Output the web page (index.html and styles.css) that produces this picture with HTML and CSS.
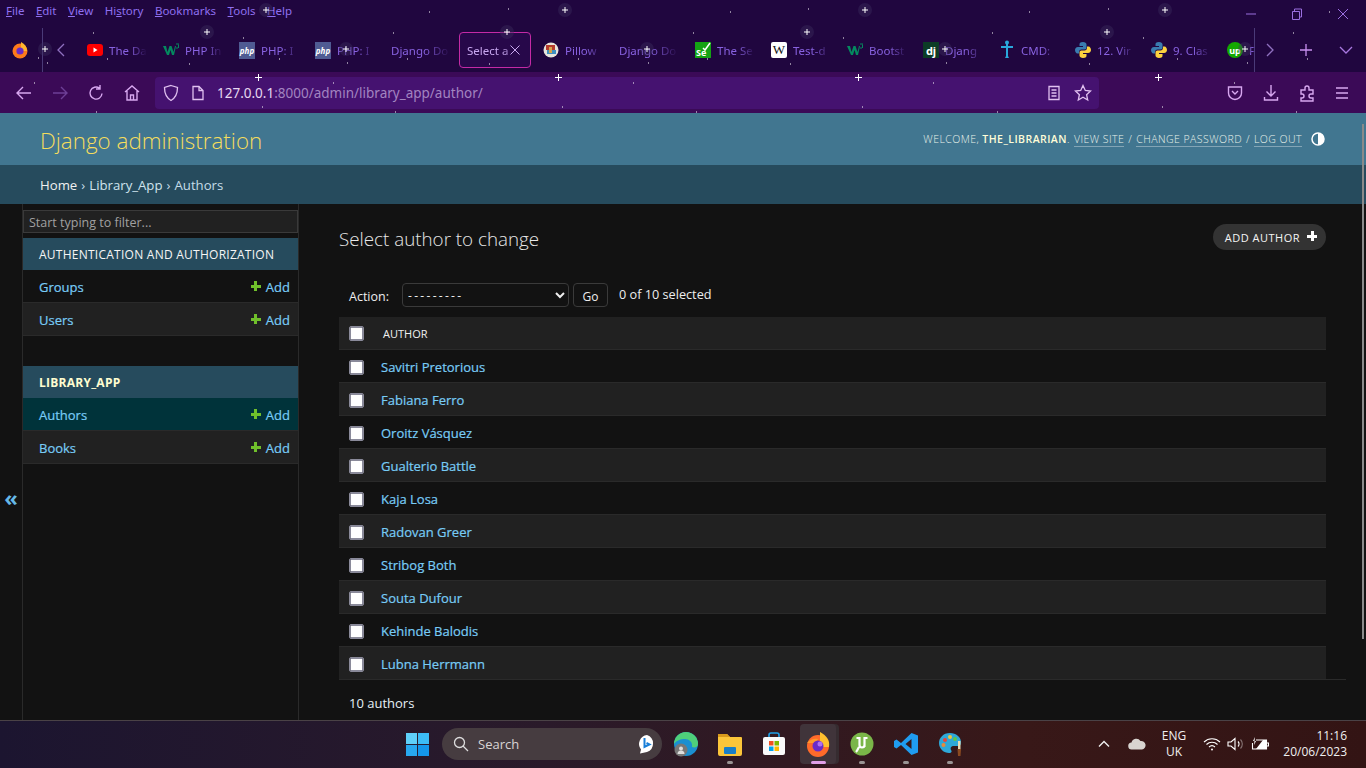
FILE: index.html
```html
<!DOCTYPE html>
<html lang="en">
  <head>
    <meta charset="UTF-8" />
    <meta name="viewport" content="width=device-width, initial-scale=1.0" />
    <title>Select author to change | Django site admin</title>
    <link rel="stylesheet" href="styles.css">
  </head>
  <body>
    <div class="browser">
      <div class="menubar">
        <span><u>F</u>ile</span>
        <span><u>E</u>dit</span>
        <span><u>V</u>iew</span>
        <span>Hi<u>s</u>tory</span>
        <span><u>B</u>ookmarks</span>
        <span><u>T</u>ools</span>
        <span><u>H</u>elp</span>
      </div>

      <div class="winControls">
        <svg width="12" height="12" viewBox="0 0 12 12"><path d="M1 6h10" /></svg>
        <svg width="12" height="12" viewBox="0 0 12 12"><path d="M1.500 3.500h7v8h-7zM3.500 3.500v-2.500h7v8h-2" /></svg>
        <svg width="12" height="12" viewBox="0 0 12 12"><path d="M1 1l10 10M11 1L1 11" /></svg>
      </div>

      <div class="tabstrip">
        <svg class="ffLogo" width="16" height="18" viewBox="0 0 16 18">
          <circle cx="8" cy="10" r="7.500" fill="#ff7a1a" />
          <path d="M9 1c4 2 6 5 6 9H9z" fill="#ffb52e" />
          <circle cx="8" cy="10" r="3.600" fill="#6b2bc4" />
        </svg>
        <div class="stripStart">
          <svg class="scrollBtn" width="10" height="14" viewBox="0 0 10 14"><path d="M8 1L2 7l6 6" /></svg>
        </div>
        <div class="tabs">
          <div class="tab">
            <svg width="16" height="16" viewBox="0 0 16 16"><rect y="2" width="16" height="12" rx="3" fill="#f00" /><path d="M6.500 5.500v5l4-2.500z" fill="#fff" /></svg>
            <span>The Da</span>
          </div>
          <div class="tab">
            <svg width="16" height="16" viewBox="0 0 16 16"><path d="M0 4h3l1.500 6L6.500 4h2l2 6L12 4h1l-2 9H9L7.500 8 6 13H4z" fill="#04895f" /><path d="M13 2h3v1l-1 1 1 1-1 1h-2" fill="none" stroke="#04895f" /></svg>
            <span>PHP In</span>
          </div>
          <div class="tab">
            <span class="fav favPhp">php</span>
            <span>PHP: I</span>
          </div>
          <div class="tab">
            <span class="fav favPhp">php</span>
            <span>PHP: I</span>
          </div>
          <div class="tab">
            <span>Django Do</span>
          </div>
          <div class="tab tabActive">
            <span>Select a</span>
            <svg class="tabClose" width="12" height="12" viewBox="0 0 12 12"><path d="M1.500 1.500l9 9M10.500 1.500l-9 9" /></svg>
          </div>
          <div class="tab">
            <svg width="16" height="16" viewBox="0 0 16 16"><circle cx="8" cy="8" r="7.500" fill="#e8e4dc" /><path d="M3 3h9v5H3z" fill="#b53a2c" /><path d="M4 8h9v4H4z" fill="#3f8fc0" /><path d="M6 5h3v6H6z" fill="#d6a34a" /></svg>
            <span>Pillow</span>
          </div>
          <div class="tab">
            <span>Django Do</span>
          </div>
          <div class="tab">
            <svg width="16" height="16" viewBox="0 0 16 16"><rect width="16" height="16" fill="#14a314" /><path d="M8 6l2 2 5-7" fill="none" stroke="#fff" stroke-width="1.500" /><text x="1" y="14" class="seText">Se</text></svg>
            <span>The Se</span>
          </div>
          <div class="tab">
            <span class="fav favWiki">W</span>
            <span>Test-d</span>
          </div>
          <div class="tab">
            <svg width="16" height="16" viewBox="0 0 16 16"><path d="M0 4h3l1.500 6L6.500 4h2l2 6L12 4h1l-2 9H9L7.500 8 6 13H4z" fill="#04895f" /><path d="M13 2h3v1l-1 1 1 1-1 1h-2" fill="none" stroke="#04895f" /></svg>
            <span>Bootst</span>
          </div>
          <div class="tab">
            <span class="fav favDj">dj</span>
            <span>Djang</span>
          </div>
          <div class="tab">
            <svg width="16" height="20" viewBox="0 0 16 20"><circle cx="8" cy="2.500" r="2" fill="#2aa7dc" /><path d="M7 4h2v2h5v2H9v8l1 2H6l1-2V8H2V6h5z" fill="#2aa7dc" /></svg>
            <span>CMD:</span>
          </div>
          <div class="tab">
            <svg width="16" height="16" viewBox="0 0 16 16"><use href="#pyLogo" /></svg>
            <span>12. Vir</span>
          </div>
          <div class="tab">
            <svg width="16" height="16" viewBox="0 0 16 16"><use href="#pyLogo" /></svg>
            <span>9. Clas</span>
          </div>
          <div class="tab tabLast">
            <span class="fav favUp">up</span>
            <span>F</span>
          </div>
        </div>
        <div class="stripEnd">
          <svg class="scrollBtn" width="10" height="14" viewBox="0 0 10 14"><path d="M2 1l6 6-6 6" /></svg>
          <svg class="newTab" width="14" height="14" viewBox="0 0 14 14"><path d="M7 1v12M1 7h12" /></svg>
          <svg class="allTabs" width="14" height="10" viewBox="0 0 14 10"><path d="M1 2l6 6 6-6" /></svg>
        </div>
      </div>

      <div class="navbar">
        <svg class="navIcon" width="18" height="18" viewBox="0 0 18 18"><path d="M16 9H2M8 3L2 9l6 6" /></svg>
        <svg class="navIcon navOff" width="18" height="18" viewBox="0 0 18 18"><path d="M2 9h14M10 3l6 6-6 6" /></svg>
        <svg class="navIcon" width="18" height="18" viewBox="0 0 18 18"><path d="M15 9.500A6 6 0 1 1 12.500 4.200M13 1v4h-4" /></svg>
        <svg class="navIcon" width="18" height="18" viewBox="0 0 18 18"><path d="M2 8l7-6 7 6M4 7v9h10V7M7.500 16v-5h3v5" /></svg>
        <div class="urlbar">
          <svg class="urlIcon" width="16" height="18" viewBox="0 0 16 18"><path d="M8 1.500l6.500 2c0 6-1.500 10-6.500 13-5-3-6.500-7-6.500-13z" /></svg>
          <svg class="urlIcon" width="14" height="16" viewBox="0 0 14 16"><path d="M2 1.500h6l4 4v9H2zM8 1.500v4h4" /></svg>
          <span class="urlText">127.0.0.1<span class="urlDim">:8000/admin/library_app/author/</span></span>
          <div class="urlEnd">
            <svg class="urlIcon" width="14" height="16" viewBox="0 0 14 16"><path d="M2 1.500h10v13H2zM4.500 5h5M4.500 8h5M4.500 11h5" /></svg>
            <svg class="urlIcon" width="18" height="18" viewBox="0 0 18 18"><path d="M9 1.500l2.300 5 5.200.6-3.900 3.600 1.100 5.300L9 13.300 4.300 16l1.100-5.300-3.900-3.600 5.200-.6z" /></svg>
          </div>
        </div>
        <div class="navRight">
          <svg class="navIcon" width="16" height="18" viewBox="0 0 16 18"><path d="M1.500 3h13v6a6.500 6.500 0 0 1-13 0zM5 7l3 3 3-3" /></svg>
          <svg class="navIcon" width="16" height="18" viewBox="0 0 16 18"><path d="M8 1v11M3.500 7.500L8 12l4.500-4.500M1.500 13v3h13v-3" /></svg>
          <svg class="navIcon" width="16" height="18" viewBox="0 0 16 18"><path d="M2 6h4V4a2 2 0 0 1 4 0v2h4v4h-2a2 2 0 0 0 0 4h2v3H2v-3h1a2 2 0 0 0 0-4H2z" /></svg>
          <svg class="navIcon" width="14" height="18" viewBox="0 0 14 18"><path d="M1 4h12M1 9h12M1 14h12" /></svg>
        </div>
      </div>

      <svg class="stars" width="1366" height="113" viewBox="0 0 1366 113">
        <defs>
          <symbol id="pyLogo" viewBox="0 0 16 16">
            <path d="M8 0C5 0 4.500 1 4.500 2.500V4H8v1H3C1 5 0 6.500 0 8s1 3.500 2.500 3.500H4V10c0-1.500 1-2.500 2.500-2.500h3c1.500 0 2-1 2-2v-3C11.500 1 10 0 8 0z" fill="#3a7cb0" />
            <path d="M8 16c3 0 3.500-1 3.500-2.500V12H8v-1h5c2 0 3-1.500 3-3s-1-3.500-2.500-3.500H12V6c0 1.500-1 2.500-2.500 2.500h-3c-1.500 0-2 1-2 2v3C4.500 15 6 16 8 16z" fill="#fdd23e" />
          </symbol>
          <g id="star">
            <circle r="7" fill="#3c3060" fill-opacity="0.4" />
            <path d="M-3 0h6M0-3v6" stroke="#fff" stroke-width="1" />
          </g>
        </defs>
        <use href="#star" x="45" y="49" /><use href="#star" x="207" y="32" /><use href="#star" x="266" y="10" />
        <use href="#star" x="565" y="10" /><use href="#star" x="507" y="32" /><use href="#star" x="346" y="49" />
        <use href="#star" x="647" y="49" /><use href="#star" x="865" y="10" /><use href="#star" x="1165" y="10" />
        <use href="#star" x="807" y="32" /><use href="#star" x="1107" y="32" /><use href="#star" x="945" y="49" />
        <use href="#star" x="1245" y="49" />
        <path class="starPlain" d="M255 77.500h7M258.500 74v7M555 77.500h7M558.500 74v7M855 77.500h7M858.500 74v7M1155 77.500h7M1158.500 74v7" />
        <path class="starDots" d="M93 33h1M243 38h1M393 33h1M38 58h1M47 63h1M107 59h1M189 64h1M279 59h1M347 63h1M407 59h1M489 64h1M578 59h1M648 63h1M429 12h1M508 9h1M333 83h1M633 83h1M34 83h1M262 107h1M562 107h1M96 112h1M395 112h1M730 12h1M808 9h1M1029 12h1M1108 9h1M1329 12h1M693 33h1M843 38h1M992 33h1M1143 38h1M1293 33h1M707 59h1M790 64h1M946 63h1M1089 64h1M1247 63h1M1307 59h1M1177 59h1M933 83h1M1234 83h1M862 107h1M1162 107h1M696 112h1M997 112h1M1296 112h1" />
      </svg>
    </div>

    <header class="siteHeader">
      <h1 class="brand">Django administration</h1>
      <div class="userTools">
        <span>Welcome, <strong>the_librarian</strong>.</span>
        <a>View site</a> / <a>Change password</a> / <a>Log out</a>
        <svg class="themeToggle" width="14" height="14" viewBox="0 0 14 14"><circle cx="7" cy="7" r="6" fill="none" stroke="#fff" stroke-width="1.500" /><path d="M7 1a6 6 0 0 1 0 12z" fill="#fff" /></svg>
      </div>
    </header>

    <div class="breadcrumbs">
      <a>Home</a><span class="crumbSep">›</span><a>Library_App</a><span class="crumbSep">›</span>Authors
    </div>

    <div class="adminBody">
      <div class="sideToggle"><span>«</span></div>

      <aside class="sidebar">
        <input class="navFilter" type="text" placeholder="Start typing to filter..." />

        <div class="appList">
          <div class="appCaption">Authentication and Authorization</div>
          <div class="modelRow"><a>Groups</a><a class="addLink"><i class="plus"></i>Add</a></div>
          <div class="modelRow rowAlt"><a>Users</a><a class="addLink"><i class="plus"></i>Add</a></div>
        </div>

        <div class="appList">
          <div class="appCaption captionStrong">Library_App</div>
          <div class="modelRow rowCurrent"><a>Authors</a><a class="addLink"><i class="plus"></i>Add</a></div>
          <div class="modelRow rowAlt"><a>Books</a><a class="addLink"><i class="plus"></i>Add</a></div>
        </div>
      </aside>

      <main class="content">
        <div class="titleRow">
          <h2 class="pageTitle">Select author to change</h2>
          <a class="addButton">Add author<i class="plus plusWhite"></i></a>
        </div>

        <div class="actions">
          <label class="actionLabel">Action:</label>
          <select class="actionSelect"><option>---------</option></select>
          <button class="goBtn">Go</button>
          <span class="selCount">0 of 10 selected</span>
        </div>

        <div class="resultList">
          <div class="resultHead"><span class="check"></span><span class="colName">Author</span></div>
          <div class="resultRow"><span class="check"></span><a>Savitri Pretorious</a></div>
          <div class="resultRow rowAlt"><span class="check"></span><a>Fabiana Ferro</a></div>
          <div class="resultRow"><span class="check"></span><a>Oroitz Vásquez</a></div>
          <div class="resultRow rowAlt"><span class="check"></span><a>Gualterio Battle</a></div>
          <div class="resultRow"><span class="check"></span><a>Kaja Losa</a></div>
          <div class="resultRow rowAlt"><span class="check"></span><a>Radovan Greer</a></div>
          <div class="resultRow"><span class="check"></span><a>Stribog Both</a></div>
          <div class="resultRow rowAlt"><span class="check"></span><a>Souta Dufour</a></div>
          <div class="resultRow"><span class="check"></span><a>Kehinde Balodis</a></div>
          <div class="resultRow rowAlt"><span class="check"></span><a>Lubna Herrmann</a></div>
        </div>

        <div class="paginator">10 authors</div>
      </main>

      <div class="pageScroll"></div>
    </div>

    <footer class="taskbar">
      <div class="taskApps">
        <svg class="winLogo" width="23" height="23" viewBox="0 0 24 24">
          <rect width="11.500" height="11.500" fill="#5fd0fa" /><rect x="12.500" width="11.500" height="11.500" fill="#3cbcf6" />
          <rect y="12.500" width="11.500" height="11.500" fill="#28a8f0" /><rect x="12.500" y="12.500" width="11.500" height="11.500" fill="#1496ea" />
        </svg>
        <div class="searchPill">
          <svg width="16" height="16" viewBox="0 0 16 16"><circle cx="6.500" cy="6.500" r="5" fill="none" stroke="#ddd" stroke-width="1.300" /><path d="M10 10l5 5" stroke="#ddd" stroke-width="1.300" /></svg>
          <span>Search</span>
          <svg class="bingIcon" width="20" height="20" viewBox="0 0 20 20"><path d="M10 1a9 9 0 0 1 0 17l-7 1.500 1-4A9 9 0 0 1 10 1z" fill="#fff" /><path d="M7.500 4v9l5-2.500-3-1.500" fill="none" stroke="#1a7fd8" stroke-width="2" /></svg>
        </div>
        <div class="taskIcon">
          <svg width="26" height="26" viewBox="0 0 26 26"><circle cx="13" cy="13" r="12" fill="#1b8fd0" /><path d="M1 13a12 12 0 0 1 24 0c0 3-3 4-6 3 1-5-3-8-7-8-5 0-9 2-11 5z" fill="#4fcf7a" /><circle cx="8" cy="19" r="6.500" fill="#777" /><circle cx="8" cy="17.500" r="2" fill="#ddd" /><path d="M4.500 23a3.500 3.500 0 0 1 7 0z" fill="#ddd" /></svg>
        </div>
        <div class="taskIcon running">
          <svg width="26" height="24" viewBox="0 0 26 24"><path d="M1 4a2 2 0 0 1 2-2h7l3 3h11a1 1 0 0 1 1 1v16a2 2 0 0 1-2 2H3a2 2 0 0 1-2-2z" fill="#fcc63a" /><path d="M1 2h9l3 3H1z" fill="#d99a1c" /><rect x="7" y="15" width="12" height="7" rx="1" fill="#1a7fc8" /></svg>
        </div>
        <div class="taskIcon">
          <svg width="22" height="24" viewBox="0 0 22 24"><path d="M6 6V3a2 2 0 0 1 2-2h6a2 2 0 0 1 2 2v3" fill="none" stroke="#1ea0e8" stroke-width="1.600" /><rect y="5" width="22" height="18" rx="2" fill="#fafafa" /><rect x="6" y="9" width="4.500" height="4.500" fill="#f25022" /><rect x="11.500" y="9" width="4.500" height="4.500" fill="#7fba00" /><rect x="6" y="14.500" width="4.500" height="4.500" fill="#00a4ef" /><rect x="11.500" y="14.500" width="4.500" height="4.500" fill="#ffb900" /></svg>
        </div>
        <div class="taskIcon current">
          <svg width="24" height="26" viewBox="0 0 24 26"><circle cx="12" cy="15" r="11" fill="#ff6a2a" /><path d="M14 1c7 4 10 8 9 15H14z" fill="#ffc02e" /><path d="M1 12c3-4 8-5 11-4l-2 4z" fill="#ff9a2a" /><circle cx="12" cy="15" r="5.500" fill="#6a2bc8" /><circle cx="14" cy="13" r="2.500" fill="#b070f0" /></svg>
        </div>
        <div class="taskIcon running">
          <svg width="24" height="24" viewBox="0 0 24 24"><circle cx="12" cy="12" r="11.500" fill="#7ab648" /><path d="M6.500 6h3v7a2.500 2.500 0 0 0 5 0V6h3M14.500 6v9M9 15c-1 2-2 4-3 5" fill="none" stroke="#fff" stroke-width="2.200" /></svg>
        </div>
        <div class="taskIcon running">
          <svg width="24" height="24" viewBox="0 0 24 24"><path d="M17.500 1L24 3.500v17L17.500 23 7 13l-4.500 3.500L0 15v-6l2.500-1.500L7 11zM17.500 7l-6 5 6 5z" fill="#1f9cf0" fill-rule="evenodd" /></svg>
        </div>
        <div class="taskIcon running">
          <svg width="24" height="26" viewBox="0 0 24 26"><path d="M12 2C5 2 1 7 1 12c0 6 5 10 10 10 3 0 3-2 2-3-1-2 0-4 3-4h4c2 0 3-1 3-4 0-5-5-9-11-9z" fill="#2ea8d8" /><circle cx="7" cy="9" r="2" fill="#e8443a" /><circle cx="12" cy="6" r="2" fill="#f0c53a" /><circle cx="17" cy="8" r="2" fill="#5cc84a" /><circle cx="5.500" cy="14" r="2" fill="#e88a3a" /><path d="M20 10h2.500v9H20z" fill="#e8d9b0" /><path d="M19.500 18h3.500l-.5 7h-2.500z" fill="#8a4a20" /></svg>
        </div>
      </div>

      <div class="tray">
        <svg class="trayChevron" width="12" height="8" viewBox="0 0 12 8"><path d="M1 6.500l5-5 5 5" /></svg>
        <svg class="trayCloud" width="18" height="12" viewBox="0 0 18 12"><path d="M4 11.500a3.500 3.500 0 0 1-.5-7A5 5 0 0 1 12.500 3a4.300 4.300 0 0 1 1.500 8.500z" fill="#d8d4d0" /></svg>
        <div class="trayLang">ENG<br />UK</div>
        <svg class="trayIcon trayWifi" width="18" height="14" viewBox="0 0 18 14"><path d="M1 5a11.500 11.500 0 0 1 16 0M3.500 7.500a8 8 0 0 1 11 0M6 10a4.500 4.500 0 0 1 6 0" /><circle cx="9" cy="12.500" r="1" fill="#fff" stroke="none" /></svg>
        <svg class="trayIcon" width="18" height="14" viewBox="0 0 18 14"><path d="M1 5h3l4-3.500v11L4 9H1zM11 4.500a3.500 3.500 0 0 1 0 5" /><path d="M13.500 2.500a6.500 6.500 0 0 1 0 9" stroke-opacity="0.4" /></svg>
        <svg class="trayIcon" width="18" height="14" viewBox="0 0 18 14"><path d="M5 3h10.500v9H1.500V6M16 6h1.500v3H16" /><path d="M4 0L2 4h3L3 8M5 12l7-9h3.500v9z" fill="#fff" stroke="none" /></svg>
        <div class="trayClock">11:16<br />20/06/2023</div>
      </div>
    </footer>
  </body>
</html>
```

FILE: styles.css
```css
* {
  margin: 0;
  padding: 0;
  box-sizing: border-box;
}

html,
body {
  height: 100%;
  overflow: hidden;
}

body {
  display: flex;
  flex-direction: column;
  background: #121212;
  font-family: "Open Sans", "Noto Sans", sans-serif;
  font-size: 13px;
  color: #eeeeee;
}

/* browser chrome */
.browser {
  position: relative;
  height: 113px;
  flex: none;
  background: #20063f;
}

.menubar {
  display: flex;
  gap: 11.500px;
  height: 22px;
  padding: 2px 0 0 6px;
  font-family: "Noto Sans", sans-serif;
  font-size: 11.500px;
  line-height: 18px;
  color: #8f70f0;
}

.winControls {
  position: absolute;
  top: 8px;
  right: 17px;
  display: flex;
  gap: 34px;
}

.winControls svg {
  fill: none;
  stroke: #9a6fe0;
  stroke-width: 1;
}

.tabstrip {
  display: flex;
  align-items: center;
  height: 50px;
  padding-top: 6px;
}

.ffLogo {
  flex: none;
  margin-left: 12px;
}

.stripStart {
  display: flex;
  align-items: center;
  flex: none;
  height: 44px;
  margin-left: 14px;
  padding-left: 13px;
  border-left: 1px solid #4a3a78;
}

.scrollBtn {
  flex: none;
  fill: none;
  stroke: #8f70c0;
  stroke-width: 1.300;
}

.tabs {
  display: flex;
  gap: 4px;
  flex: none;
  width: 1175px;
  margin-left: 13px;
}

.tab {
  position: relative;
  display: flex;
  align-items: center;
  gap: 6px;
  flex: none;
  width: 72px;
  height: 36px;
  padding: 0 4px 0 8px;
  border-radius: 4px;
  font-family: "Noto Sans", sans-serif;
  font-size: 11.500px;
  color: #8862e0;
  white-space: nowrap;
}

.tab > svg,
.tab > .fav {
  flex: none;
}

.tab > span:not(.fav) {
  flex: 1;
  -webkit-mask-image: linear-gradient(to right, #000 55%, transparent);
  mask-image: linear-gradient(to right, #000 55%, transparent);
}

.tabLast {
  width: 36px;
  padding-right: 0;
}

.tabActive {
  outline: 1px solid #c42aa6;
  outline-offset: -1px;
  background: #27084a;
  color: #c8a8f0;
}

/* sits over the end of the faded tab title */
.tab > .tabClose {
  position: absolute;
  top: 12px;
  right: 10px;
  fill: none;
  stroke: #c8a8f0;
  stroke-width: 1;
}

.fav {
  display: flex;
  align-items: center;
  justify-content: center;
  width: 16px;
  height: 16px;
}

.favPhp {
  height: 17px;
  background: #4f5b93;
  color: #fff;
  font-size: 8px;
  font-style: italic;
  font-weight: 700;
}

.favWiki {
  background: #fff;
  border-radius: 2px;
  color: #111;
  font-family: "Liberation Serif", serif;
  font-size: 13px;
}

.favDj {
  background: #0c3c26;
  color: #fff;
  font-size: 11px;
  font-weight: 700;
}

.favUp {
  background: #14a800;
  border-radius: 50%;
  color: #fff;
  font-size: 9px;
  font-weight: 700;
}

.seText {
  font-family: "Noto Sans", sans-serif;
  font-size: 9px;
  font-weight: 700;
  fill: #fff;
}

.stripEnd {
  display: flex;
  align-items: center;
  flex: none;
  height: 44px;
  border-left: 1px solid #4a3a78;
}

.stripEnd .scrollBtn {
  margin-left: 10px;
}

.newTab {
  margin-left: 24px;
  fill: none;
  stroke: #c890f0;
  stroke-width: 1.300;
}

.allTabs {
  margin-left: 26px;
  fill: none;
  stroke: #a878e0;
  stroke-width: 1.300;
}

.navbar {
  display: flex;
  align-items: center;
  height: 41px;
  padding-left: 15px;
  background: #3b0a57;
}

.navIcon {
  flex: none;
  margin-right: 18px;
  fill: none;
  stroke: #d8a8f0;
  stroke-width: 1.400;
}

.navOff {
  stroke: #6d3f96;
}

.urlbar {
  display: flex;
  align-items: center;
  gap: 12px;
  width: 944px;
  height: 32px;
  margin-left: -4px;
  padding-left: 8px;
  border-radius: 4px;
  background: #451270;
  font-family: "Noto Sans", sans-serif;
  font-size: 13.500px;
}

.urlIcon {
  flex: none;
  fill: none;
  stroke: #e0c0f0;
  stroke-width: 1.300;
}

.urlText {
  color: #e6d8f0;
}

.urlDim {
  color: #a284c0;
}

.urlEnd {
  display: flex;
  align-items: center;
  gap: 13px;
  margin-left: auto;
  padding-right: 7px;
}

.navRight {
  display: flex;
  align-items: center;
  margin-left: auto;
}

.navRight .navIcon {
  margin-right: 20px;
}

.navRight .navIcon:last-child {
  margin-right: 17px;
}

.stars {
  position: absolute;
  top: 0;
  left: 0;
  pointer-events: none;
}

.starPlain,
.starDots {
  stroke: #fff;
  stroke-width: 1;
}

/* django header */
.siteHeader {
  display: flex;
  align-items: center;
  justify-content: space-between;
  flex: none;
  height: 52px;
  padding: 0 41px 0 40px;
  background: #417690;
}

.brand {
  padding-top: 2px;
  font-size: 22.400px;
  font-weight: 300;
  color: #f5dd5d;
}

.userTools {
  display: flex;
  align-items: center;
  gap: 4px;
  font-size: 10.500px;
  font-weight: 300;
  letter-spacing: 0.45px;
  text-transform: uppercase;
  color: #e8f2ea;
}

.userTools strong {
  font-weight: 600;
  color: #fffdd8;
}

.userTools a {
  border-bottom: 1px solid rgba(255, 255, 255, 0.35);
}

.themeToggle {
  margin-left: 5px;
}

.breadcrumbs {
  flex: none;
  height: 39px;
  padding: 0 40px;
  background: #264b5d;
  font-size: 13.200px;
  line-height: 41px;
  color: #c4dce8;
}

.breadcrumbs a {
  color: #f0f0f0;
}

.breadcrumbs a + .crumbSep + a {
  color: #cfe4ee;
}

.crumbSep {
  margin: 0 4px;
}

/* admin layout */
.adminBody {
  position: relative;
  display: flex;
  flex: 1;
  min-height: 0;
}

.sideToggle {
  display: flex;
  align-items: center;
  justify-content: center;
  flex: none;
  width: 23px;
  border-right: 1px solid #2a2a2a;
  padding-top: 70px;
  font-size: 22px;
  font-weight: 700;
  color: #66b8e8;
}

.sidebar {
  flex: none;
  width: 276px;
  padding-top: 6px;
  border-right: 1px solid #2a2a2a;
}

.navFilter {
  display: block;
  width: 100%;
  height: 23px;
  margin-bottom: 5px;
  padding: 2px 5px 0;
  border: 1px solid #3a3a3a;
  background: #212121;
  font: 12.500px "Open Sans", sans-serif;
  color: #eee;
}

.navFilter::placeholder {
  color: #a0a0a0;
  opacity: 1;
}

.appList {
  margin-bottom: 30px;
}

.appCaption {
  height: 32px;
  padding-left: 16px;
  background: #264b5d;
  font-size: 12px;
  line-height: 34px;
  letter-spacing: 0.25px;
  text-transform: uppercase;
  color: #f5f5f5;
}

.captionStrong {
  font-weight: 700;
  color: #fffdd0;
}

.modelRow {
  display: flex;
  align-items: center;
  justify-content: space-between;
  height: 33px;
  padding: 2px 8px 0 16px;
  border-bottom: 1px solid #2a2a2a;
  color: #78ccf6;
  -webkit-text-stroke: 0.2px;
}

.rowAlt {
  background: #212121;
}

.rowCurrent {
  background: #00333a;
}

.addLink {
  display: flex;
  align-items: center;
  gap: 5px;
}

.plus {
  position: relative;
  top: -1px;
  display: inline-block;
  width: 10px;
  height: 10px;
  background:
    linear-gradient(#70bf2b, #70bf2b) center / 100% 3px no-repeat,
    linear-gradient(#70bf2b, #70bf2b) center / 3px 100% no-repeat;
}

.plusWhite {
  background:
    linear-gradient(#fff, #fff) center / 100% 3px no-repeat,
    linear-gradient(#fff, #fff) center / 3px 100% no-repeat;
}

.content {
  flex: 1;
  min-width: 0;
  padding: 20px 20px 0 40px;
}

.titleRow {
  display: flex;
  align-items: flex-start;
  justify-content: space-between;
  height: 59px;
  padding-right: 20px;
}

.pageTitle {
  padding-top: 2px;
  font-size: 18.800px;
  font-weight: 300;
  color: #e8e8e8;
}

.addButton {
  display: flex;
  align-items: center;
  gap: 7px;
  height: 26px;
  padding: 0 9px 0 12px;
  border-radius: 13px;
  background: #333333;
  font-size: 11px;
  letter-spacing: 0.5px;
  text-transform: uppercase;
  color: #f5f5f5;
}

.actions {
  display: flex;
  align-items: center;
  height: 24px;
  margin-bottom: 10px;
  padding-left: 10px;
  font-size: 12.500px;
}

.actionLabel {
  padding-top: 2px;
}

.actionSelect {
  width: 167px;
  height: 24px;
  margin-left: 13px;
  padding-left: 1px;
  border: 1px solid #3a3a3a;
  border-radius: 4px;
  background: #121212;
  font: 12px "Open Sans", sans-serif;
  letter-spacing: 2.300px;
  color: #eee;
}

.goBtn {
  width: 35px;
  height: 24px;
  margin-left: 4px;
  padding-top: 2px;
  border: 1px solid #3a3a3a;
  border-radius: 4px;
  background: #121212;
  font: 12px "Open Sans", sans-serif;
  color: #eee;
}

.selCount {
  margin-left: 11px;
  margin-top: -3px;
  font-size: 12.700px;
}

.resultList {
  margin-right: 20px;
}

.resultHead,
.resultRow {
  display: flex;
  align-items: center;
  height: 33px;
  padding-left: 10px;
  border-bottom: 1px solid #2a2a2a;
}

.resultRow {
  padding-top: 2px;
}

.resultHead {
  background: #212121;
}

.colName {
  margin-left: 19px;
  font-size: 11px;
  font-weight: 500;
  text-transform: uppercase;
  color: #f0f0f0;
}

.resultRow a {
  margin-left: 17px;
  font-weight: 500;
  color: #78ccf6;
  -webkit-text-stroke: 0.2px;
}

.check {
  flex: none;
  width: 13px;
  height: 13px;
  border: 1px solid #8a8a9a;
  outline: 1px solid #8a8a9a;
  border-radius: 1px;
  background: #fff;
  margin-left: 1px;
  margin-right: 1px;
}

.paginator {
  height: 39px;
  padding: 14px 10px 0;
  border-top: 1px solid #2a2a2a;
  margin-top: -1px;
  font-size: 13px;
  color: #e6f0f6;
}

.pageScroll {
  position: absolute;
  top: -80px;
  right: 2px;
  width: 2px;
  height: 515px;
  background: #8a8a8a;
}

/* windows taskbar */
.taskbar {
  display: flex;
  align-items: center;
  flex: none;
  height: 48px;
  padding-bottom: 1px;
  border-top: 1px solid #4a4246;
  background: linear-gradient(to right, #1c1530, #2a1a2a 40%, #381818 75%, #331414);
}

.taskApps {
  display: flex;
  align-items: center;
  margin-left: 406px;
}

.searchPill {
  display: flex;
  align-items: center;
  gap: 9px;
  width: 220px;
  height: 32px;
  margin-left: 13px;
  margin-right: 4px;
  padding: 0 5px 0 11px;
  border-radius: 16px;
  background: #463c40;
  color: #d8d4d4;
}

.bingIcon {
  margin-left: auto;
}

.taskIcon {
  position: relative;
  display: flex;
  align-items: center;
  justify-content: center;
  width: 40px;
  height: 40px;
  margin-right: 4px;
  border-radius: 4px;
}

.taskIcon.running::after,
.taskIcon.current::after {
  content: "";
  position: absolute;
  bottom: 0;
  left: 50%;
  width: 6px;
  height: 3px;
  margin-left: -3px;
  border-radius: 2px;
  background: #9a9494;
}

.taskIcon.current {
  width: 36px;
  margin: 0 6px 0 2px;
  background: #40343a;
  box-shadow: 3px 0 0 #362c30;
}

.taskIcon.current::after {
  width: 15px;
  margin-left: -7px;
  background: #e0a0e8;
}

.tray {
  display: flex;
  align-items: center;
  margin-left: auto;
  padding-right: 19px;
  font-size: 12px;
  color: #f0f0f0;
}

.trayChevron {
  fill: none;
  stroke: #f0f0f0;
  stroke-width: 1.400;
}

.trayCloud {
  margin-left: 18px;
}

.trayLang {
  width: 40px;
  margin-left: 8px;
  line-height: 16px;
  text-align: center;
}

.trayIcon {
  margin-left: 6px;
  fill: none;
  stroke: #fff;
  stroke-width: 1.100;
}

.trayWifi {
  margin-left: 9px;
}

.trayClock {
  width: 66px;
  margin-left: 12px;
  line-height: 16px;
  text-align: right;
  white-space: nowrap;
}
```
